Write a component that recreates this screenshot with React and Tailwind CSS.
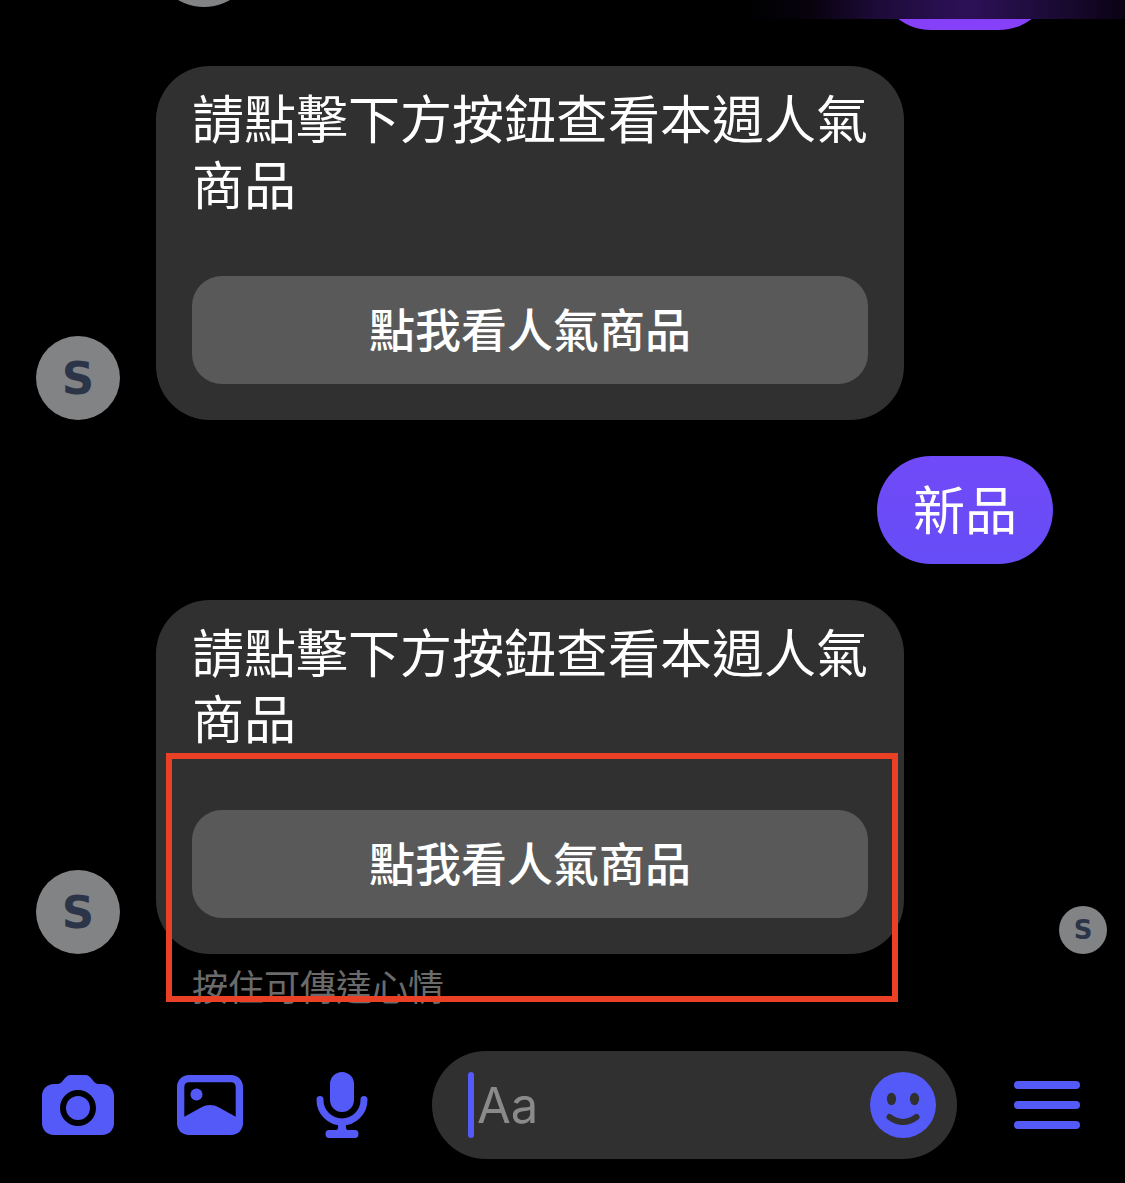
import React from "react";

function Avatar({ small = false }) {
  return (
    <div
      className={
        small
          ? "flex size-12 shrink-0 items-center justify-center rounded-full bg-[#818385] font-['DejaVu_Sans',sans-serif] text-[26px] leading-none font-bold text-[#2c3447]"
          : "flex size-21 shrink-0 items-center justify-center rounded-full bg-[#818385] font-['DejaVu_Sans',sans-serif] text-[45px] leading-none font-bold text-[#2c3447]"
      }
    >
      S
    </div>
  );
}

function CardBubble() {
  return (
    <div className="rounded-[54px] bg-[#303030] px-9 pt-[18px] pb-9">
      <p className="text-[52px] leading-[66px]">請點擊下方按鈕查看本週人氣商品</p>
      <button
        type="button"
        className="mt-15 flex h-27 w-full items-center justify-center rounded-[30px] bg-[#595959] pb-1.5 text-[46px] leading-none font-medium"
      >
        點我看人氣商品
      </button>
    </div>
  );
}

function CameraIcon() {
  return (
    <svg className="h-15 w-18" viewBox="0 0 72 60" fill="currentColor" aria-hidden="true">
      <path
        fillRule="evenodd"
        d="M12 9H15C18 9 19.500 7.500 21 5.500C23.500 2 25.500 0 29 0H43C46.500 0 48.500 2 51 5.500C52.500 7.500 54 9 57 9H60C67 9 72 14 72 21V48C72 55 67 60 60 60H12C5 60 0 55 0 48V21C0 14 5 9 12 9ZM36 15A18 18 0 1 0 36 51A18 18 0 1 0 36 15Z"
      />
      <circle cx="36" cy="33" r="12" />
    </svg>
  );
}

function GalleryIcon() {
  return (
    <svg className="h-15 w-[66px]" viewBox="0 0 66 60" fill="currentColor" aria-hidden="true">
      <path
        fillRule="evenodd"
        d="M12 0H54C61 0 66 5 66 12V48C66 55 61 60 54 60H12C5 60 0 55 0 48V12C0 5 5 0 12 0ZM12 7.300C9 7.300 7.300 9 7.300 12V41.800L24 32.500C30 29.200 36 29.200 42 32.500L58.700 41.800V12C58.700 9 57 7.300 54 7.300Z"
      />
      <circle cx="19.500" cy="19.500" r="6" />
    </svg>
  );
}

function MicIcon() {
  return (
    <svg className="h-[66px] w-[52px]" viewBox="0 0 52 66" fill="currentColor" aria-hidden="true">
      <rect x="14" y="0" width="24" height="40" rx="12" />
      <path
        d="M4 27.500V28A22 22 0 0 0 48 28V27.500"
        fill="none"
        stroke="currentColor"
        strokeWidth="7"
        strokeLinecap="round"
      />
      <path d="M22 51H30V56Q30 58 32 58H39Q42.500 58 42.500 62T39 66H13Q9.500 66 9.500 62T13 58H20Q22 58 22 56Z" />
    </svg>
  );
}

function SmileIcon() {
  return (
    <svg className="size-[66px]" viewBox="0 0 66 66" aria-hidden="true">
      <circle cx="33" cy="33" r="33" fill="currentColor" />
      <ellipse cx="21.500" cy="27" rx="4.600" ry="6.200" fill="#303030" />
      <ellipse cx="44.500" cy="27" rx="4.600" ry="6.200" fill="#303030" />
      <path d="M19.500 45Q33 55 46.500 45" fill="none" stroke="#303030" strokeWidth="6" strokeLinecap="round" />
    </svg>
  );
}

function MenuIcon() {
  return (
    <svg className="h-12 w-[66px]" viewBox="0 0 66 48" fill="currentColor" aria-hidden="true">
      <rect y="0" width="66" height="8" rx="4" />
      <rect y="20" width="66" height="8" rx="4" />
      <rect y="40" width="66" height="8" rx="4" />
    </svg>
  );
}

export default function App() {
  return (
    <div className="flex min-h-screen flex-col bg-black font-['Noto_Sans_CJK_TC',sans-serif] text-white">
      <header className="flex h-[19px] items-end overflow-hidden bg-[linear-gradient(90deg,#000_66%,#07020d_72%,#1d0b38_78%,#2d1158_86%,#1d0b38_93%,#0a0214_100%)] pb-3 pl-38">
        <div className="size-26 shrink-0 rounded-full bg-[#818385]" />
      </header>

      <main className="flex flex-1 flex-col">
        <div className="flex h-[11px] items-end justify-end overflow-hidden pr-18">
          <div className="h-27 w-44 shrink-0 rounded-full bg-[#8540f8]" />
        </div>

        <div className="mt-9 flex items-end gap-9 px-9">
          <Avatar />
          <div className="max-w-[748px] flex-1">
            <CardBubble />
          </div>
        </div>

        <div className="mt-9 flex justify-end pr-18">
          <p className="flex h-27 items-center rounded-full bg-linear-to-b from-[#714af8] to-[#664df6] px-9 pb-1 text-[52px] leading-[66px]">
            新品
          </p>
        </div>

        <div className="mt-9 flex items-end gap-9 pr-[18px] pl-9">
          <Avatar />
          <div className="relative max-w-[748px] flex-1">
            <CardBubble />
            <div className="pointer-events-none absolute top-[153px] right-[6px] left-[10px] z-10 h-[249px] border-6 border-[#ea4025]" />
          </div>
          <div className="ml-auto">
            <Avatar small />
          </div>
        </div>
        <p className="mt-2.5 pl-48 text-[36px] leading-[42px] text-[#6b6b6b]">按住可傳達心情</p>
      </main>

      <footer className="flex items-center pt-10 pr-[45px] pb-6 pl-[42px] text-[#545af8]">
        <div className="flex items-center gap-15">
          <button type="button" aria-label="相機" className="flex w-18 justify-center">
            <CameraIcon />
          </button>
          <button type="button" aria-label="相片" className="flex w-18 justify-center">
            <GalleryIcon />
          </button>
          <button type="button" aria-label="語音" className="flex w-18 justify-center">
            <MicIcon />
          </button>
        </div>
        <div className="ml-[54px] flex h-27 min-w-0 flex-1 items-center rounded-full bg-[#303030] pr-[21px] pl-9">
          <span className="h-[66px] w-[6px] shrink-0 rounded-full bg-current" />
          <input
            type="text"
            aria-label="訊息"
            placeholder="Aa"
            className="ml-[3px] min-w-0 flex-1 bg-transparent pt-0.5 font-['Inter',sans-serif] text-[49px] text-white outline-none placeholder:text-[#8a8a8a]"
          />
          <button type="button" aria-label="表情符號">
            <SmileIcon />
          </button>
        </div>
        <button type="button" aria-label="選單" className="ml-[57px]">
          <MenuIcon />
        </button>
      </footer>
    </div>
  );
}
